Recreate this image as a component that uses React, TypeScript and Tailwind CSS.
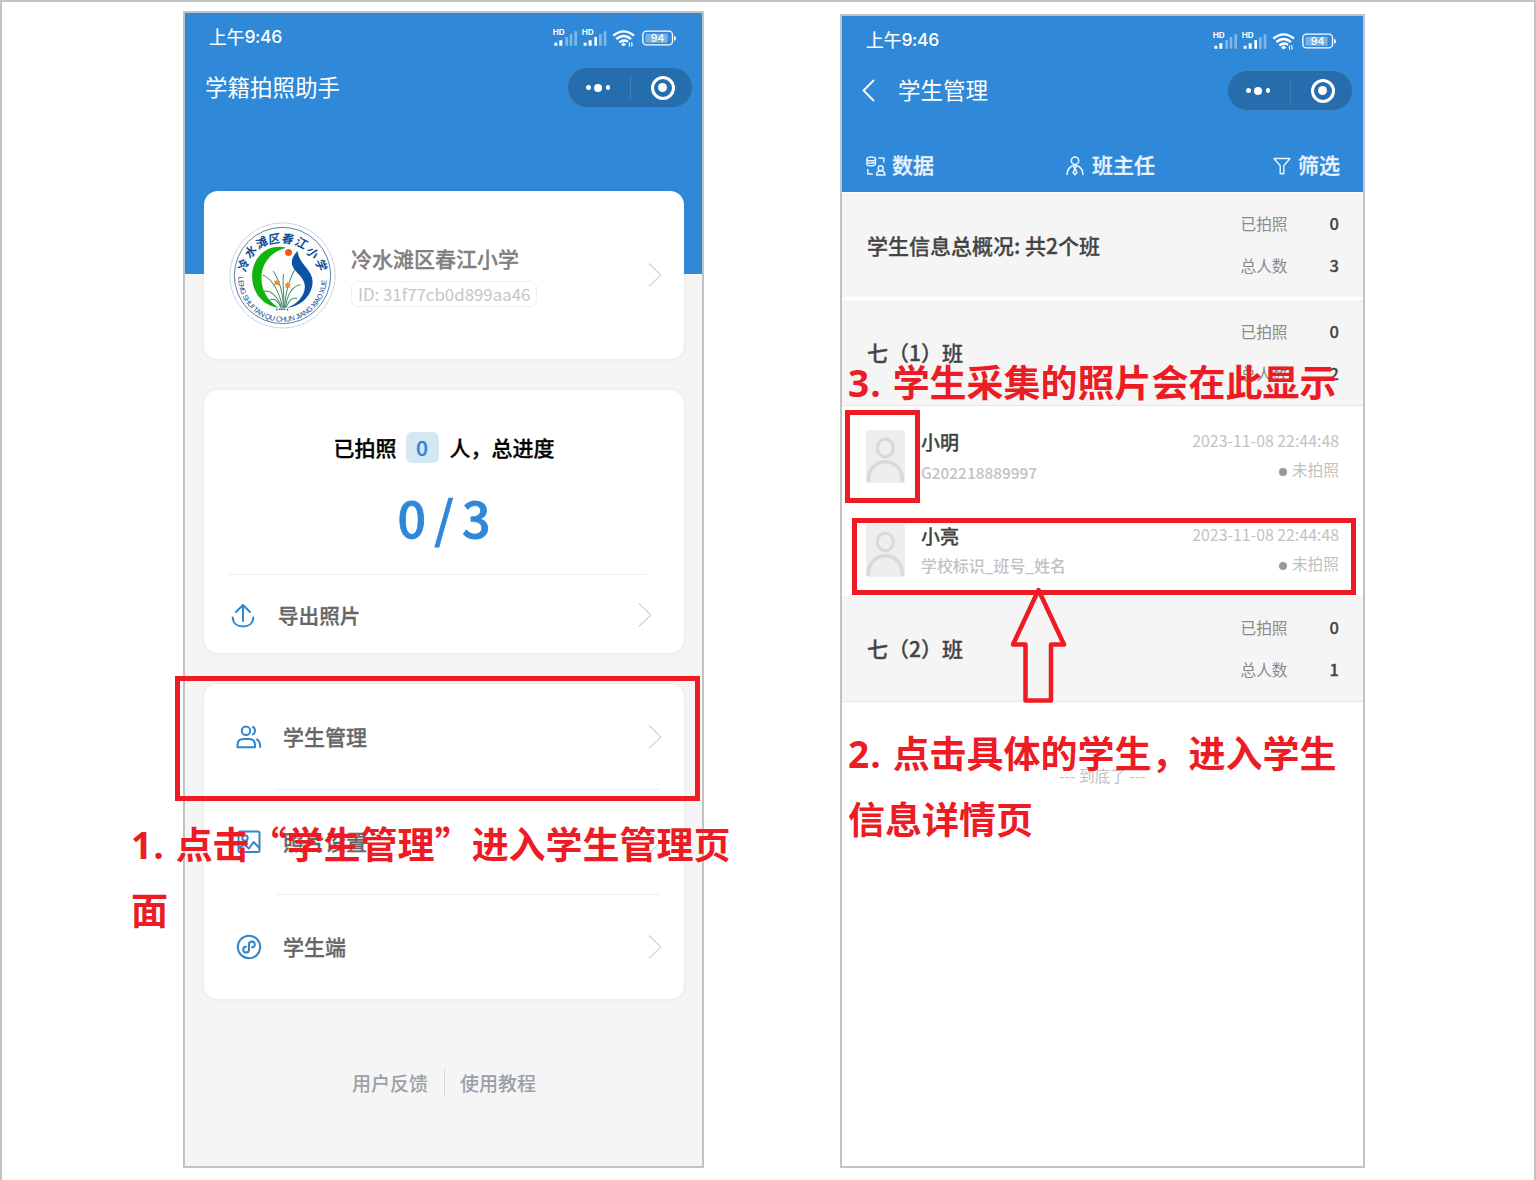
import React from "react";

const CJK = "font-['Noto_Sans_CJK_SC',sans-serif]";

// Medium weight thickened slightly, like the semi-bold labels of the app.
const strong = "font-medium [-webkit-text-stroke:0.3px]";

function StatusIcons() {
  return (
    <svg width="126" height="22" viewBox="0 0 378 66" fill="#fff" className="-mt-px block shrink-0">
      <g>
        <text x="-1" y="26" fontSize="23" fontWeight="700" fontFamily="Inter, sans-serif" textLength="36" lengthAdjust="spacingAndGlyphs">HD</text>
        <path d="M4 50h9v9H4zM19 43h9v16h-9z" />
        <path d="M37 33h8v26h-8zM50 24h8v35h-8zM64 16h8v43h-8z" opacity=".38" />
      </g>
      <g>
        <text x="86" y="26" fontSize="23" fontWeight="700" fontFamily="Inter, sans-serif" textLength="36" lengthAdjust="spacingAndGlyphs">HD</text>
        <path d="M92 50h9v9h-9zM107 43h9v16h-9zM124 33h8v26h-8z" />
        <path d="M138 24h8v35h-8zM152 16h8v43h-8z" opacity=".38" />
      </g>
      <g fill="none" stroke="#fff" strokeWidth="7">
        <path d="M181 29Q212 3 243 29" />
        <path d="M190 39Q212 21 234 39" />
        <path d="M199 49Q212 39 225 47" />
      </g>
      <path d="M212 49l8 7-8 5-8-5z" />
      <path d="M226 55l5-7v14h-3v-7zM235 48h3v8h3l-6 7z" />
      <rect x="269.500" y="15.500" width="89" height="41" rx="11" fill="none" stroke="#fff" strokeWidth="4" />
      <rect x="277" y="23" width="67" height="27" rx="3" opacity=".35" />
      <path d="M363 29q6 2 6 8t-6 8z" />
      <text x="314" y="47.500" fontSize="32" fontWeight="500" textAnchor="middle" fontFamily="Inter, sans-serif">94</text>
    </svg>
  );
}

function StatusBar() {
  return (
    <div className="flex h-6 items-center justify-between text-white">
      <div className="flex items-center text-[17.700px] leading-6">
        <span className="pb-0.5 [-webkit-text-stroke:0.2px]">上午</span>
        <span className="font-['Inter',sans-serif] text-[17.500px] font-medium leading-6 tracking-[-0.3px]">9:46</span>
      </div>
      <StatusIcons />
    </div>
  );
}

function Capsule() {
  return (
    <div className="flex h-[41px] w-[126px] shrink-0 items-center rounded-full border border-[#3f86c2] bg-[#266dad]">
      <div className="flex w-[62px] items-center justify-center gap-[3.500px] pr-0.5">
        <i className="size-[4.500px] rounded-full bg-white" />
        <i className="size-[8px] rounded-full bg-white" />
        <i className="size-[4.500px] rounded-full bg-white" />
      </div>
      <div className="h-[25px] w-px bg-[#3c7fba]" />
      <div className="flex flex-1 justify-center pl-0.5">
        <div className="flex size-[24px] items-center justify-center rounded-full border-[3px] border-white">
          <i className="size-[8.500px] rounded-full bg-white" />
        </div>
      </div>
    </div>
  );
}

function Chevron() {
  return (
    <svg width="14" height="26" viewBox="0 0 14 26" fill="none" stroke="#d2d2d2" strokeWidth="1.1" className="shrink-0">
      <path d="M1 1.500L12.800 13L1 24.500" />
    </svg>
  );
}

const sealChars: [string, number, number, number][] = [
  ["冷", 71, 164, -72],
  ["水", 92, 124, -52],
  ["滩", 125, 97, -32],
  ["区", 163, 86, -10],
  ["春", 203, 86, 8],
  ["江", 243, 99, 27],
  ["小", 276, 128, 48],
  ["学", 302, 164, 68],
];

function SchoolLogo() {
  return (
    <svg width="107" height="107" viewBox="27 35 320 320" className="block shrink-0">
      <circle cx="187" cy="195" r="157" fill="#fff" stroke="#bfc3c8" strokeWidth="2.500" strokeDasharray="14 2" />
      <circle cx="187" cy="195" r="144" fill="#fdfefc" stroke="#3568a6" strokeWidth="2.500" />
      {sealChars.map(([c, x, y, r]) => (
        <text
          key={c}
          transform={`translate(${x} ${y}) rotate(${r}) skewX(-8)`}
          y="12"
          textAnchor="middle"
          fontSize="35"
          fontWeight="700"
          fill="#0c4b99"
          fontFamily="'Noto Sans CJK SC', sans-serif"
        >
          {c}
        </text>
      ))}
      <defs>
        <path id="seal-arc" d="M54.500 199A132.500 132.500 0 0 0 319.500 203" />
      </defs>
      <text fontSize="22" fill="#1c4f92" fontFamily="'Liberation Sans', sans-serif">
        <textPath href="#seal-arc" textLength="410" lengthAdjust="spacing">LENG SHUI TAN QU CHUN JIANG XIAO XUE</textPath>
      </text>
      <path d="M198 112C140 96 96 144 96 196C96 246 127 284 176 292C142 270 124 240 124 202C124 162 150 124 198 112Z" fill="#0fb40f" />
      <path d="M232 122C219 135 212 149 216 164C223 187 254 197 254 229C253 259 229 281 201 292C247 286 277 251 277 213C277 178 236 161 232 122Z" fill="#0b52a4" />
      <g fill="none" stroke="#3f8d6c" strokeWidth="3" strokeLinecap="round">
        <path d="M190 290C190 250 176 205 160 183" />
        <path d="M191 290C192 250 186 215 190 192" />
        <path d="M193 290C196 245 206 210 222 180" />
        <path d="M187 290C176 240 155 206 129 194" />
        <path d="M184 290C172 254 148 236 130 243" />
        <path d="M196 290C202 250 216 228 239 223" />
        <path d="M198 290C208 268 216 260 229 264" />
        <path d="M181 290C174 268 160 262 150 268" />
      </g>
      <g fill="#f08a35">
        <path d="M168 206l5 7 7-2-5 7 3 8-9-4-8 2 3-7-4-7 8 2z" />
        <path d="M202 213l4 7 7 0-5 6 2 7-8-3-7 3 2-7-4-6 7-1z" />
      </g>
      <circle cx="205" cy="126" r="10.500" fill="#f2591b" />
      <path d="M168 297h4M176 296h20M200 297h4" stroke="#2c5d92" strokeWidth="5" strokeDasharray="4 1" />
    </svg>
  );
}

const blueLine = { fill: "none", stroke: "#2f86cc", strokeWidth: 2 } as const;

function UploadIcon() {
  return (
    <svg width="24" height="26" viewBox="0 0 24 26" {...blueLine} strokeLinecap="round" strokeLinejoin="round" className="mt-px shrink-0">
      <path d="M12 18V2.500M5 9l7-7 7 7" />
      <path d="M1.700 14.500C2 20.500 6.500 23.500 12 23.500S22 20.500 22.300 14.500" />
    </svg>
  );
}

function PeopleIcon() {
  return (
    <svg width="26" height="24" viewBox="0 0 26 24" {...blueLine} strokeLinejoin="round" className="shrink-0">
      <circle cx="10" cy="5.700" r="4.200" />
      <path d="M1.500 22.200V20C1.500 15.500 4 14 7.500 14h5.500c3.500 0 6 1.500 6 6v2.200z" />
      <path d="M16.200 1.800c3.800 1 3.800 6.600 0 7.800M20.300 14c3 1 4 3.300 4 8.800" />
    </svg>
  );
}

function PhotoIcon() {
  return (
    <svg width="24" height="24" viewBox="0 0 24 24" {...blueLine} strokeLinejoin="round" className="shrink-0">
      <rect x="1.500" y="1.500" width="21" height="20.500" rx="1.500" />
      <circle cx="8" cy="8" r="2.700" />
      <path d="M1.500 18.500l5.500-4 5 4 4.500-6.500 6 6" />
    </svg>
  );
}

function MiniProgramIcon() {
  return (
    <svg width="26" height="26" viewBox="0 0 26 26" {...blueLine} className="shrink-0">
      <circle cx="13" cy="13" r="11.200" />
      <path d="M10 12.800A2.900 2.900 0 1 0 13 15.900V10.300A2.900 2.900 0 1 1 16 13.300" strokeLinecap="round" />
    </svg>
  );
}

const cardClass = "rounded-[14px] bg-white shadow-[0_0_5px_rgba(0,0,0,0.07)]";

function MenuRow({ icon, label, divider }: { icon: React.ReactNode; label: string; divider?: boolean }) {
  return (
    <div className="relative flex h-[105px] items-center pl-8 pr-[22px]">
      <div className="flex w-[26px] justify-center">{icon}</div>
      <span className={`ml-[21px] pb-px text-[21px] leading-8 text-[#666] ${strong}`}>{label}</span>
      <div className="ml-auto">
        <Chevron />
      </div>
      {divider && <div className="absolute -bottom-px left-[71px] right-6 h-px bg-[#efefef]" />}
    </div>
  );
}

function HomePhone() {
  return (
    <section className="h-[1157px] w-[521px] shrink-0 border-2 border-[#c3c3c3] bg-[#f5f5f5]">
      <header className="h-[261px] bg-[#3089d8] pt-3">
        <div className="pl-6 pr-[23px]">
          <StatusBar />
        </div>
        <div className="mt-[18px] flex items-center justify-between pl-5 pr-[9px]">
          <h1 className="pb-1 text-[22.500px] leading-8 text-white">学籍拍照助手</h1>
          <Capsule />
        </div>
      </header>
      <main className="-mt-[83px] ml-[19px] flex w-[480px] flex-col gap-[31px]">
        <div className={`flex h-[168px] items-center pl-[25px] pr-[22px] ${cardClass}`}>
          <SchoolLogo />
          <div className="ml-[15px] flex flex-col items-start gap-[9px] pt-px">
            <h2 className={`text-[21px] leading-7 text-[#808080] ${strong}`}>冷水滩区春江小学</h2>
            <div className="flex h-[26px] items-center rounded-[7px] border border-[#efefef] px-1.5 text-[16.850px] leading-6 text-[#c6c6c6]">
              ID: 31f77cb0d899aa46
            </div>
          </div>
          <div className="ml-auto">
            <Chevron />
          </div>
        </div>
        <div className={`h-[263px] pt-[42px] ${cardClass}`}>
          <div className={`flex items-center justify-center text-[21px] leading-[31px] text-black ${strong}`}>
            <span>已拍照</span>
            <span className="ml-[9px] mr-[11px] h-[31px] w-[33px] rounded-md bg-[#d6e7f4] text-center text-[#2f87d8]">0</span>
            <span>人，总进度</span>
          </div>
          <div className="mt-[18px] text-center text-[50px] font-medium leading-[70px] text-[#2f87d8] [-webkit-text-stroke:0.8px] [word-spacing:-3px]">0 / 3</div>
          <div className="ml-[23px] mt-[23px] h-px w-[420px] bg-[#efefef]" />
          <div className="flex h-[80px] items-center pl-[27px] pr-8">
            <UploadIcon />
            <span className={`ml-[23px] pb-px text-[20.600px] leading-8 text-[#666] ${strong}`}>导出照片</span>
            <div className="ml-auto">
              <Chevron />
            </div>
          </div>
        </div>
        <div className={cardClass}>
          <MenuRow icon={<PeopleIcon />} label="学生管理" divider />
          <MenuRow icon={<PhotoIcon />} label="照片设置" divider />
          <MenuRow icon={<MiniProgramIcon />} label="学生端" />
        </div>
      </main>
      <footer className="mt-[70px] flex items-center pl-[167px] text-[19px] font-medium leading-7 text-[#9aa0a8]">
        <span>用户反馈</span>
        <i className="mx-[15.500px] h-7 w-px bg-[#d5d5d5]" />
        <span>使用教程</span>
      </footer>
    </section>
  );
}

function DataIcon() {
  return (
    <svg width="20" height="20" viewBox="0 0 20 20" fill="none" stroke="#e8f3ff" strokeWidth="1.400" strokeLinejoin="round">
      <ellipse cx="5.200" cy="2.900" rx="4.300" ry="1.900" />
      <path d="M.9 2.900v5c0 2.500 8.600 2.500 8.600 0v-5M.9 5.400c0 2.400 8.600 2.400 8.600 0" />
      <path d="M12.500 2h5.300v4.500M1.800 13v5h5" />
      <circle cx="14.700" cy="12.200" r="2.500" />
      <path d="M10.600 19c0-2.300 1.400-4.200 4.100-4.200s4.200 1.900 4.200 4.200z" />
    </svg>
  );
}

function TeacherIcon() {
  return (
    <svg width="18" height="20" viewBox="0 0 18 20" fill="none" stroke="#e8f3ff" strokeWidth="1.500" strokeLinecap="round" strokeLinejoin="round">
      <circle cx="9" cy="4.700" r="3.700" />
      <path d="M1 18.500c.3-5 3-8.500 8-9.500 5 1 7.700 4.500 8 9.500" />
      <path d="M7.500 10.500L9 12.500l1.500-2M9 12.500l-1.900 4L9 18.700l1.900-2.200z" />
    </svg>
  );
}

function FilterIcon() {
  return (
    <svg width="18" height="18" viewBox="0 0 18 18" fill="none" stroke="#e8f3ff" strokeWidth="1.400" strokeLinejoin="round">
      <path d="M1 1.500h16l-6.200 7.300v7.900H7.200V8.800z" />
    </svg>
  );
}

function Stat({ label, value }: { label: string; value: number }) {
  return (
    <div className="flex items-center justify-between text-[#8a8a8a]">
      <span className="rounded-xs outline outline-offset-[5px] outline-[#f2f2f2]">{label}</span>
      <b className={`pb-px text-[16.500px] leading-[23px] text-[#444] ${strong}`}>{value}</b>
    </div>
  );
}

function ClassSection({ title, done, total, className }: { title: string; done: number; total: number; className: string }) {
  return (
    <div className={`flex items-center justify-between bg-[#f5f5f5] pl-[25px] pr-6 ${className}`}>
      <h3 className={`pb-px text-[21px] leading-8 text-[#444] ${strong}`}>{title}</h3>
      <div className="flex w-[98.500px] flex-col gap-[18px] text-[15.700px] leading-6">
        <Stat label="已拍照" value={done} />
        <Stat label="总人数" value={total} />
      </div>
    </div>
  );
}

function StudentRow({ name, code, codeClass, divider }: { name: string; code: string; codeClass: string; divider?: boolean }) {
  return (
    <div className="relative flex h-[94px] pl-6 pr-6 pt-[22px]">
      <svg width="39" height="53" viewBox="0 0 39 53" className="mt-0.5 shrink-0">
        <rect width="39" height="53" rx="3" fill="#eee" />
        <g fill="none" stroke="#d9d9d9" strokeWidth="3.200">
          <ellipse cx="19.300" cy="18" rx="8" ry="8.800" />
          <path d="M2.200 52C1.500 25 37 25 36.500 52" strokeWidth="3.500" />
        </g>
      </svg>
      <div className="ml-4">
        <div className={`text-[19px] leading-[28px] text-[#444] ${strong}`}>{name}</div>
        <div className={`mt-1 font-medium leading-6 text-[#c2c2c2] ${codeClass}`}>{code}</div>
      </div>
      <div className="ml-auto flex flex-col items-end pt-px text-[15.880px] leading-6 text-[#c2c2c2]">
        <span>2023-11-08 22:44:48</span>
        <span className="mt-[5px] flex items-center gap-[5px] text-[15.700px]">
          <i className="mt-[3px] size-2 rounded-full bg-[#999]" />
          未拍照
        </span>
      </div>
      {divider && <div className="absolute bottom-[-4px] left-6 right-2 border-t border-dashed border-[#f6f6f6]" />}
    </div>
  );
}

function StudentsPhone() {
  return (
    <section className="mt-[3px] h-[1154px] w-[525px] shrink-0 border-2 border-[#c3c3c3] bg-white">
      <header className="h-[176px] bg-[#3089d8] pt-3">
        <div className="pl-6 pr-6">
          <StatusBar />
        </div>
        <div className="mt-[18px] flex items-center pl-5 pr-[10px]">
          <svg width="13" height="23" viewBox="0 0 13 23" fill="none" stroke="#fff" strokeWidth="1.800">
            <path d="M12 1L1.500 11.500L12 22" />
          </svg>
          <h1 className="ml-[23px] mr-auto pb-1 text-[22.500px] leading-8 text-white">学生管理</h1>
          <Capsule />
        </div>
        <nav className={`mt-[39px] flex items-center justify-between pl-6 pr-[23px] text-[21px] leading-8 text-[#e8f3ff] ${strong}`}>
          <span className="flex items-center gap-1.5"><DataIcon /><span className="pb-[3px] leading-[29px]">数据</span></span>
          <span className="flex items-center gap-2 pl-3.5"><TeacherIcon /><span className="pb-[3px] leading-[29px]">班主任</span></span>
          <span className="flex items-center gap-[7px]"><FilterIcon /><span className="pb-[3px] leading-[29px]">筛选</span></span>
        </nav>
      </header>
      <ClassSection title="学生信息总概况: 共2个班" done={0} total={3} className="mt-px h-[104px]" />
      <ClassSection title="七（1）班" done={0} total={2} className="mt-[3px] h-[106px] border-b border-[#e6e6e6]" />
      <StudentRow name="小明" code="G202218889997" codeClass="text-[15.400px]" />
      <StudentRow name="小亮" code="学校标识_班号_姓名" codeClass="text-[15.900px]" />
      <ClassSection title="七（2）班" done={0} total={1} className="mt-0.5 h-[106px] border-b border-[#e6e6e6]" />
      <div className="mt-[62px] text-center text-[15.700px] leading-6 text-[#c2c2c2]">--- 到底了 ---</div>
    </section>
  );
}

const noteClass = "absolute whitespace-nowrap font-['Open_Sans','Noto_Sans_CJK_SC',sans-serif] text-[37px] font-bold leading-[66px] text-[#ed1c24]";

export default function App() {
  return (
    <div className={`relative flex h-[1180px] w-[1536px] items-start gap-[136px] overflow-hidden border-x-2 border-t-2 border-[#c3c3c3] bg-white pl-[181px] pt-[9px] ${CJK}`}>
      <HomePhone />
      <StudentsPhone />

      <div className="absolute left-[173px] top-[674px] h-[125px] w-[525px] border-[5px] border-[#ed1c24]" />
      <p className={`${noteClass} left-[129px] top-[808px]`}>
        <span className="tracking-[1.100px]">1. </span>点击<span className="font-['Noto_Sans_CJK_SC',sans-serif]">“</span>学生管理<span className="font-['Noto_Sans_CJK_SC',sans-serif]">”</span>进入学生管理页
        <br />面
      </p>

      <div className="absolute left-[843px] top-[408px] h-[93px] w-[75px] border-[5px] border-[#ed1c24]" />
      <p className={`${noteClass} left-[846px] top-[348px]`}><span className="tracking-[1.100px]">3. </span>学生采集的照片会在此显示</p>

      <div className="absolute left-[850px] top-[516px] h-[77px] w-[504px] border-[5px] border-[#ed1c24]" />
      <svg width="60" height="120" viewBox="0 0 60 120" fill="none" stroke="#ed1c24" strokeWidth="4.500" strokeLinejoin="round" className="absolute left-[1007px] top-[584px]">
        <path d="M29.500 4L55 58.500H42V114.500H16.500V58.500H4Z" />
      </svg>
      <p className={`${noteClass} left-[846px] top-[719px]`}>
        <span className="tracking-[1.100px]">2. </span>点击具体的学生，进入学生
        <br />信息详情页
      </p>
    </div>
  );
}
